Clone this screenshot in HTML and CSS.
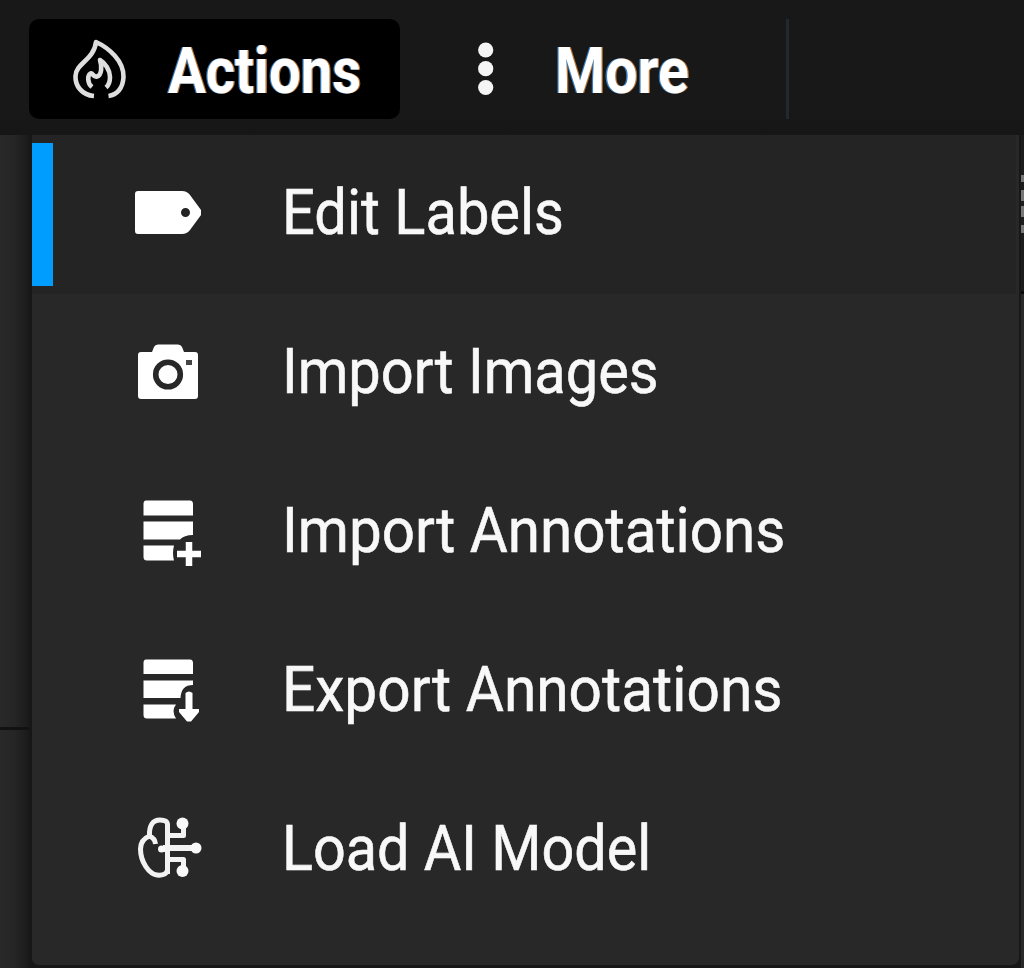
FILE: index.html
```html
<!DOCTYPE html>
<html lang="en">
<head>
<meta charset="utf-8">
<title>Actions menu</title>
<link rel="stylesheet" href="styles.css">
</head>
<body>
<header class="toolbar">
  <button class="tool tool-active">
    <svg class="tool-icon" width="56" height="62" viewBox="71 38 56 62" fill="none" stroke="#dedede" stroke-width="4.6" stroke-linejoin="round">
      <path d="M94 96C82 95 75 86 75.500 76C76 63 94 60 96 42C109 48 124 61 123.500 77C123 88 117 95 108.500 96"/>
      <path d="M92 87C87 83 87.500 75 90.500 73.500C93 72.500 93 77.500 97 76.500C102 75 102 66 100 60C105 63 110 70 110 77C110 82 109 85 106 87.500"/>
    </svg>
    <span class="tool-text actions">Actions</span>
  </button>
  <button class="tool tool-more">
    <svg class="tool-icon" width="24" height="62" viewBox="474 38 24 62" fill="#f5f5f5">
      <circle cx="485.700" cy="50" r="7.600"/><circle cx="485.700" cy="68.700" r="7.600"/><circle cx="485.700" cy="87.500" r="7.600"/>
    </svg>
    <span class="tool-text more">More</span>
  </button>
  <span class="divider"></span>
</header>
<main class="workspace">
  <aside class="left"><div class="left-top"></div><div class="left-bottom"></div></aside>
  <nav class="menu">
    <a class="item selected">
      <svg class="icon" viewBox="120 135 100 159"><path fill="#fff" fill-rule="evenodd" d="M135 194Q135 191 138 191H182Q187 191 190 195L201 210V215L190 230Q187 234 182 234H138Q135 234 135 231ZM185.500 208A4.500 4.500 0 1 0 185.500 217A4.500 4.500 0 1 0 185.500 208Z"/></svg>
      <span class="label edit">Edit Labels</span>
    </a>
    <a class="item">
      <svg class="icon" viewBox="120 294 100 159"><path fill="#fff" d="M141 352H152L154 347Q155 344.500 158 344.500H178Q181 344.500 182 347L184 352H195Q198 352 198 355V396Q198 399 195 399H141Q138 399 138 396V355Q138 352 141 352Z"/><circle cx="168" cy="374.500" r="12.300" fill="none" stroke="#282828" stroke-width="5.600"/><rect x="186" y="360" width="6" height="5" fill="#444"/></svg>
      <span class="label images">Import Images</span>
    </a>
    <a class="item">
      <svg class="icon" viewBox="120 453 100 159"><path fill="#fff" d="M146 500.500H190Q193 500.500 193 504V515.500H143.500V504Q143.500 500.500 146 500.500ZM143.500 521.500H193V535Q184 535 180 539.500H143.500ZM143.500 545.500H174Q172 553 174 560.500H147Q143.500 560.500 143.500 557Z"/><path stroke="#fff" stroke-width="6.500" d="M189 542V566M177 554H201"/></svg>
      <span class="label import">Import Annotations</span>
    </a>
    <a class="item">
      <svg class="icon" viewBox="120 612 100 159"><path fill="#fff" d="M146 659.500H190Q193 659.500 193 663V674H143.500V663Q143.500 659.500 146 659.500ZM143.500 680.500H193V685Q181 685 180.500 698H143.500ZM143.500 704.500H176Q171 711 176 718.500H147Q143.500 718.500 143.500 715ZM185.500 693Q189 690 192.500 693V709H199V712L191 721.500H187L179 712V709H185.500Z"/></svg>
      <span class="label export">Export Annotations</span>
    </a>
    <a class="item">
      <svg class="icon" viewBox="120 771 100 159" fill="none" stroke="#f2f2f2" stroke-width="5" stroke-linejoin="round"><path d="M167.500 874V824Q167 820 160 820C153 820 149 825 149.500 836C142 839 140.500 844 140.500 849C140.500 862 149 874 157 875Q166 876 167.500 870M149 836Q155 838 155.500 844M160 849.500H166M167 835.500H183.500V823M167 859.500H183.500V871"/><path d="M163 848H196" stroke-width="6"/><g fill="#f8f8f8" stroke="none"><circle cx="182.500" cy="823.500" r="6"/><circle cx="196" cy="848" r="5.500"/><circle cx="182.500" cy="871" r="6"/><circle cx="161.500" cy="849" r="3.500"/></g></svg>
      <span class="label model">Load AI Model</span>
    </a>
  </nav>
  <aside class="right"><i class="mark"></i><i class="mark tall"></i><i class="mark tall next"></i><i class="mark last"></i><div class="right-bottom"></div></aside>
</main>
</body>
</html>
```

FILE: styles.css
```css
* { box-sizing: border-box; }
body {
  margin: 0;
  width: 1024px;
  height: 968px;
  overflow: hidden;
  background: #171717;
  color: #f8f8f8;
  font-family: Roboto, "Liberation Sans", sans-serif;
}
.toolbar {
  display: flex;
  height: 135px;
  padding: 19px 0 16px 29px;
  background: linear-gradient(#181818 80%, #161616);
}
.tool {
  display: flex;
  align-items: center;
  height: 100px;
  padding: 0;
  border: 0;
  border-radius: 10px;
  background: none;
  color: #fff;
  font: 700 65px/100px Roboto, "Liberation Sans", sans-serif;
}
.tool-active { width: 371px; padding-left: 42px; background: #000; }
.tool-more { width: 386px; padding-left: 74px; }
.tool-icon { flex: none; }
.tool-text {
  flex: none;
  padding-top: 3px;
  white-space: nowrap;
  transform-origin: left center;
  text-shadow: -1.5px 0 #347cbd, 1.5px 0 #b87330;
}
.actions { margin-left: 41px; transform: scaleX(.865); }
.more { margin-left: 57px; transform: scaleX(.882); }
.divider { width: 3px; height: 100px; background: #22292e; }
.workspace { display: grid; grid-template-columns: 29px 992px 3px; height: 833px; }
.left {
  display: grid;
  grid-template-rows: 592px 1fr;
  background: linear-gradient(90deg, #292929, #252525 50%, #1a1a1a);
}
.left-bottom { border-top: 3px solid #121212; }
.menu {
  border: solid #171717;
  border-width: 0 2px 3px 3px;
  border-radius: 0 0 10px 10px;
  background: #282828;
}
.item {
  display: flex;
  align-items: center;
  height: 159px;
  padding-left: 88px;
}
.selected {
  margin-right: 3px;
  background: linear-gradient(#009dff, #009dff) 0 8px / 21px 143px no-repeat #242424;
}
.icon { flex: none; width: 100px; height: 159px; }
.label {
  flex: none;
  padding-bottom: 4px;
  margin-left: 62px;
  font-size: 63px;
  line-height: 80px;
  white-space: nowrap;
  transform-origin: left center;
  -webkit-text-stroke: .6px #f8f8f8;
}
.edit { transform: scaleX(.918); }
.images { transform: scaleX(.917); }
.import { transform: scaleX(.926); }
.export { transform: scaleX(.93); }
.model { transform: scaleX(.913); }
.right { display: flex; flex-direction: column; padding-top: 40px; background: #1c1c1c; }
.mark { flex: none; height: 7px; background: #777; }
.mark.tall { height: 11px; margin-top: 8px; }
.mark.next { margin-top: 5px; }
.mark.last { height: 8px; margin-top: 8px; }
.right-bottom { flex: 1; margin-top: 58px; border-top: 3px solid #090909; background: #292929; }
```
